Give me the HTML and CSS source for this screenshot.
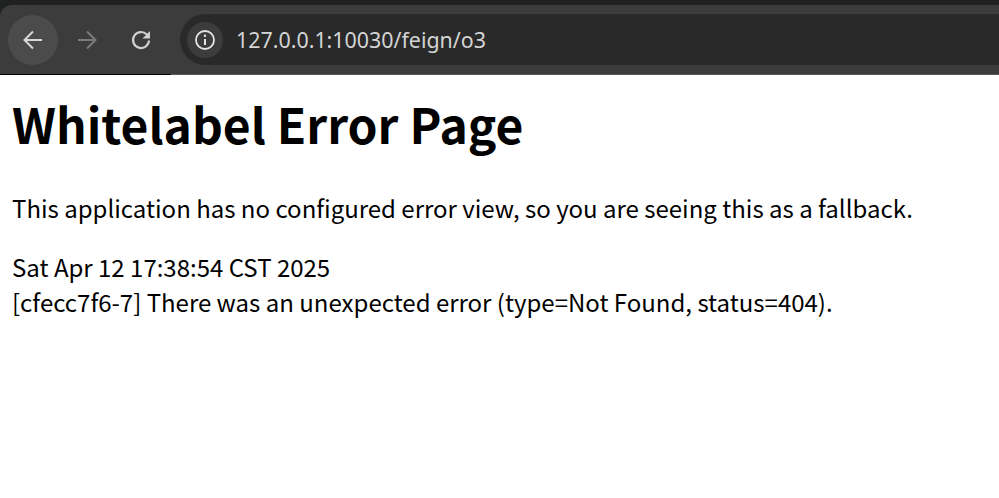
FILE: index.html
```html
<!DOCTYPE html>
<html lang="en">
<head>
<meta charset="utf-8">
<title>Whitelabel Error Page</title>
<link rel="stylesheet" href="styles.css">
</head>
<body>
<header class="chrome">
  <div class="toolbar">
    <button class="nav nav-active" aria-label="Back">
      <svg width="24" height="24" viewBox="0 0 24 24" fill="none" stroke="#d8d8d8" stroke-width="2"><path d="M21 12H4M12 3.500 3.500 12l8.500 8.500"/></svg>
    </button>
    <button class="nav" aria-label="Forward">
      <svg width="24" height="24" viewBox="0 0 24 24" fill="none" stroke="#7b7b7b" stroke-width="2"><path d="M3 12h17M12 3.500 20.500 12 12 20.500"/></svg>
    </button>
    <button class="nav" aria-label="Reload">
      <svg width="24" height="24" viewBox="0 0 24 24" fill="none"><path d="M20 12.500a8 8 0 1 1-2.400-6.200L20 8.500" stroke="#d0d0d0" stroke-width="2.200"/><path d="M21 3v7.500h-7.500z" fill="#d0d0d0"/></svg>
    </button>
    <div class="omnibox">
      <span class="site-info">
        <svg width="22" height="22" viewBox="0 0 22 22" fill="none"><circle cx="11" cy="11" r="9" stroke="#e4e4e4" stroke-width="1.800"/><path d="M11 10v6" stroke="#e4e4e4" stroke-width="2"/><circle cx="11" cy="6.800" r="1.200" fill="#e4e4e4"/></svg>
      </span>
      <span class="url">127.0.0.1:10030/feign/o3</span>
    </div>
  </div>
  <div class="edge"><span class="edge-dark"></span></div>
</header>
<main class="content">
  <h1 class="title">Whitelabel Error Page</h1>
  <p class="lead">This application has no configured error view, so you are seeing this as a fallback.</p>
  <div class="details">
    <div>Sat Apr 12 17:38:54 CST 2025</div>
    <div>[cfecc7f6-7] There was an unexpected error (type=Not Found, status=404).</div>
  </div>
</main>
</body>
</html>
```
FILE: styles.css
```css
* { box-sizing: border-box; }
html, body { margin: 0; padding: 0; background: #fff; }
body { height: 498px; overflow: hidden; font-family: "Noto Sans CJK SC", "Noto Sans", sans-serif; color: #000; }

.chrome { background: #202221; padding-top: 5px; }
.toolbar {
  height: 69px;
  background: #3c3c3c;
  border-top-left-radius: 12px;
  display: flex;
  align-items: center;
  padding: 0 0 0 8px;
}
.nav {
  width: 50px;
  height: 50px;
  margin-right: 4px;
  border: 0;
  padding: 0;
  border-radius: 50%;
  background: transparent;
  display: flex;
  align-items: center;
  justify-content: center;
}
.nav-active { background: #4b4b4b; }
.omnibox {
  flex: 1;
  height: 51px;
  margin-left: 10px;
  padding-left: 7px;
  background: #292929;
  border-radius: 26px 0 0 26px;
  display: flex;
  align-items: center;
}
.site-info {
  width: 36px;
  height: 36px;
  border-radius: 50%;
  background: #3c3c3c;
  display: flex;
  align-items: center;
  justify-content: center;
}
.url {
  margin-left: 13px;
  font-family: "Noto Sans", sans-serif;
  font-size: 21.400px;
  color: #d4d4d4;
}
.edge { height: 1px; background: #5a5a5a; }
.edge-dark { display: block; width: 171px; height: 1px; background: #000; }

.content { padding: 0 12px; }
.title { margin: 14px 0 0; font-size: 48px; line-height: 68px; font-weight: 700; }
.lead { margin: 33px 0 0; font-size: 24px; line-height: 35px; }
.details { margin-top: 24px; font-size: 24px; line-height: 35px; }
```
